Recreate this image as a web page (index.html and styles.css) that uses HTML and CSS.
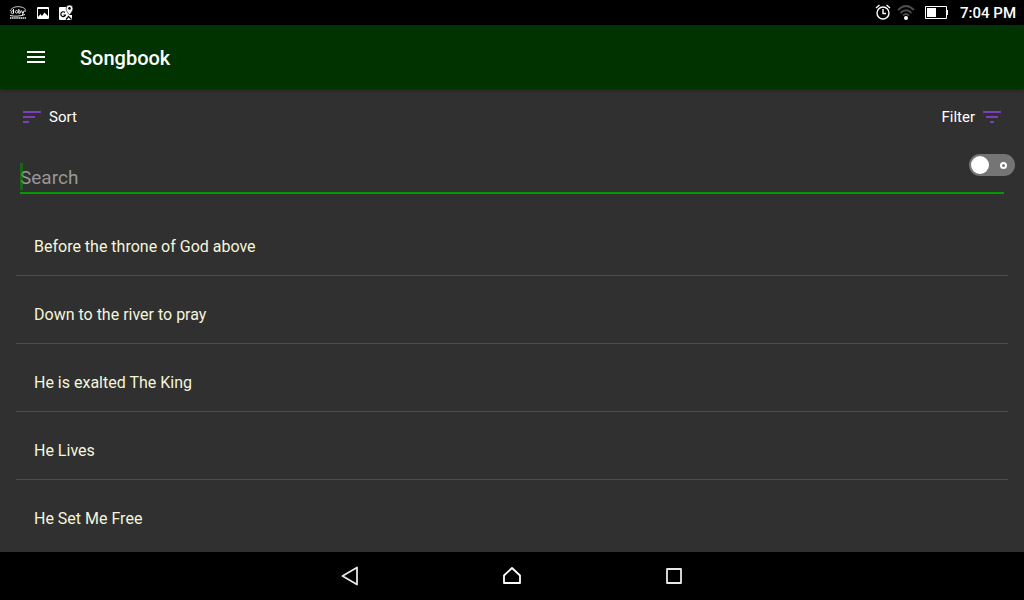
FILE: index.html
```html
<!DOCTYPE html>
<html lang="en">
<head>
    <meta charset="UTF-8">
    <meta name="viewport" content="width=device-width, initial-scale=1.0">
    <title>Songbook</title>
    <link rel="stylesheet" href="styles.css">
</head>
<body>
    <div class="status-bar">
        <div class="status-left">
            <svg width="18" height="16" viewBox="0 0 18 16" fill="none" stroke="#fff">
                <path d="M1 6C3 2 8 1 12 2S17 4 16 7" stroke-width=".8"/>
                <path d="M4.500 4v4.500M4.500 6.500a1.300 1.300 0 1 0 0 1.500M7.500 5.500a1.300 1.300 0 1 0 .1 0M9.800 4v4.500M10 6a1.200 1.200 0 1 1 0 2M12.500 5.500l1.200 2.500M15.200 5.500l-2 5"/>
                <path d="M1 10.500c4 1 10 1 15-1" stroke-width=".9"/>
                <path d="M1 13h16" stroke-width="2" stroke-dasharray="1.500 .6" stroke="#bbb"/>
            </svg>
            <svg width="12" height="16" viewBox="0 0 12 16">
                <rect y="2" width="12" height="12" rx="1" fill="#fff"/>
                <path d="M1 4h10v7L7.500 7.500 5 11 3.500 9 1 12z" fill="#000"/>
            </svg>
            <svg width="15" height="16" viewBox="0 0 15 16">
                <path d="M1 2h7v4l3 4h2v4q0 1-1 1H1q-1 0-1-1V3q0-1 1-1z" fill="#fff"/>
                <path d="M6 7.500a2.400 2.400 0 1 0 .5 2.500H4.500M7 14.500l2.500-3 3 3" fill="none" stroke="#000" stroke-width="1.200"/>
                <path d="M10.500 0a3.400 3.400 0 0 1 3.400 3.400C13.900 6 10.500 10 10.500 10S7.100 6 7.100 3.400A3.400 3.400 0 0 1 10.500 0z" fill="#fff" stroke="#000" stroke-width=".6"/>
                <circle cx="10.500" cy="3.400" r="1.300" fill="#000"/>
            </svg>
        </div>
        <div class="status-right">
            <svg width="16" height="18" viewBox="0 0 16 18" fill="none" stroke="#fff" stroke-width="1.400">
                <circle cx="8" cy="9" r="6"/>
                <path d="M8 5v4.500h3M1 4L4.500 1M15 4L11.500 1"/>
            </svg>
            <svg width="18" height="18" viewBox="0 0 18 18" fill="none" stroke="#4c4c4c" stroke-width="1.800">
                <path d="M1 6Q9-2 17 6M3.500 9Q9 3.500 14.500 9M6 11.500Q9 8.500 12 11.500"/>
                <circle cx="9" cy="14" r="2" fill="#fff" stroke="none"/>
            </svg>
            <svg class="battery" width="23" height="14" viewBox="0 0 23 14">
                <path d="M.5.5h21v12H.5z" fill="none" stroke="#fff"/>
                <path d="M2 2h9v9H2zM21 4h2v5h-2z" fill="#fff"/>
            </svg>
            <span class="clock">7:04 PM</span>
        </div>
    </div>

    <header class="app-bar">
        <button class="menu-button" aria-label="Menu">
            <svg width="18" height="12" viewBox="0 0 18 12" fill="#fff">
                <path d="M0 0h18v2H0zM0 5h18v2H0zM0 10h18v2H0z"/>
            </svg>
        </button>
        <h1>Songbook</h1>
    </header>

    <main class="content">
        <div class="tools">
            <button class="tool-button">
                <svg width="18" height="12" viewBox="0 0 18 12" fill="#7940b9">
                    <path d="M0 0h18v2H0zM0 5h12v2H0zM0 10h6v2H0z"/>
                </svg>
                Sort
            </button>
            <button class="tool-button">
                Filter
                <svg width="18" height="12" viewBox="0 0 18 12" fill="#7940b9">
                    <path d="M0 0h18v2H0zM3 5h12v2H3zM7 10h4v2H7z"/>
                </svg>
            </button>
        </div>

        <div class="search">
            <input type="text" class="search-input" placeholder="Search" aria-label="Search">
            <span class="caret"></span>
            <input type="checkbox" class="switch" aria-label="Search in lyrics">
        </div>

        <ul class="song-list">
            <li><a href="#">Before the throne of God above</a></li>
            <li><a href="#">Down to the river to pray</a></li>
            <li><a href="#">He is exalted The King</a></li>
            <li><a href="#">He Lives</a></li>
            <li><a href="#">He Set Me Free</a></li>
        </ul>
    </main>

    <nav class="nav-bar">
        <button aria-label="Back">
            <svg width="18" height="20" viewBox="0 0 18 20" fill="none" stroke="#e8e8e8" stroke-width="1.800" stroke-linejoin="round">
                <path d="M16 1.500v17L1.500 10z"/>
            </svg>
        </button>
        <button aria-label="Home">
            <svg width="18" height="20" viewBox="0 0 18 20" fill="none" stroke="#fff" stroke-width="1.800" stroke-linejoin="round">
                <path d="M9 2l8 7.500V17H1V9.500z"/>
            </svg>
        </button>
        <button aria-label="Recent apps">
            <svg width="18" height="20" viewBox="0 0 18 20" fill="none" stroke="#e8e8e8" stroke-width="1.800" stroke-linejoin="round">
                <path d="M2 3h14v14H2z"/>
            </svg>
        </button>
    </nav>
</body>
</html>
```
FILE: styles.css
```css
* {
    box-sizing: border-box;
}

body {
    margin: 0;
    height: 100vh;
    display: flex;
    flex-direction: column;
    background: #303030;
    color: #fff;
    font-family: Roboto, sans-serif;
    font-size: 16px;
}

button {
    background: none;
    border: none;
    padding: 0;
    color: inherit;
    font: inherit;
    cursor: pointer;
}

svg {
    display: block;
}

.status-bar {
    flex: none;
    height: 25px;
    padding: 0 8px 0 9px;
    display: flex;
    align-items: center;
    justify-content: space-between;
    background: #000;
}

.status-left {
    display: flex;
    align-items: center;
    gap: 10px;
}

.status-right {
    display: flex;
    align-items: center;
    gap: 6px;
}

.battery {
    margin-left: 4px;
}

.clock {
    margin-left: 6px;
    font-size: 15px;
    font-weight: 500;
}

.app-bar {
    flex: none;
    height: 64px;
    padding: 0 27px;
    display: flex;
    align-items: center;
    gap: 35px;
    background: #003300;
    box-shadow: 0 1px 4px rgba(0, 0, 0, 0.4);
}

.app-bar h1 {
    margin: 0;
    padding-top: 2px;
    font-size: 20px;
    font-weight: 500;
}

.content {
    flex: 1;
    min-height: 0;
    overflow: hidden;
}

.tools {
    height: 56px;
    padding: 0 23px;
    display: flex;
    align-items: center;
    justify-content: space-between;
}

.tool-button {
    display: flex;
    align-items: center;
    gap: 8px;
    font-size: 15px;
}

.search {
    position: relative;
    padding: 16px 20px 14px;
}

.search-input {
    display: block;
    width: 100%;
    height: 33px;
    padding: 2px 0 0;
    background: none;
    border: none;
    border-bottom: 2px solid #009900;
    outline: none;
    color: #fff;
    font: inherit;
    font-size: 19px;
}

.search-input::placeholder {
    color: #979797;
}

.caret {
    position: absolute;
    top: 18px;
    left: 20px;
    width: 3px;
    height: 27px;
    background: rgba(0, 153, 0, 0.5);
}

.switch {
    position: absolute;
    top: 9px;
    right: 9px;
    width: 46px;
    height: 22px;
    margin: 0;
    padding: 0 8px 0 2px;
    display: flex;
    align-items: center;
    justify-content: space-between;
    appearance: none;
    background: #757575;
    border-radius: 11px;
    cursor: pointer;
}

.switch::before {
    content: "";
    width: 18px;
    height: 18px;
    background: #fff;
    border-radius: 50%;
}

.switch::after {
    content: "";
    box-sizing: border-box;
    width: 7px;
    height: 7px;
    border: 2px solid #fff;
    border-radius: 50%;
}

.song-list {
    margin: 0;
    padding: 0 16px;
    list-style: none;
}

.song-list li {
    border-bottom: 1px solid #4d4d4d;
}

.song-list li:last-child {
    border-bottom: none;
}

.song-list a {
    display: flex;
    align-items: center;
    height: 67px;
    padding: 10px 18px 0;
    color: #f5f5dc;
    text-decoration: none;
}

.nav-bar {
    flex: none;
    height: 48px;
    display: flex;
    align-items: center;
    justify-content: center;
    gap: 144px;
    background: #000;
}
```
